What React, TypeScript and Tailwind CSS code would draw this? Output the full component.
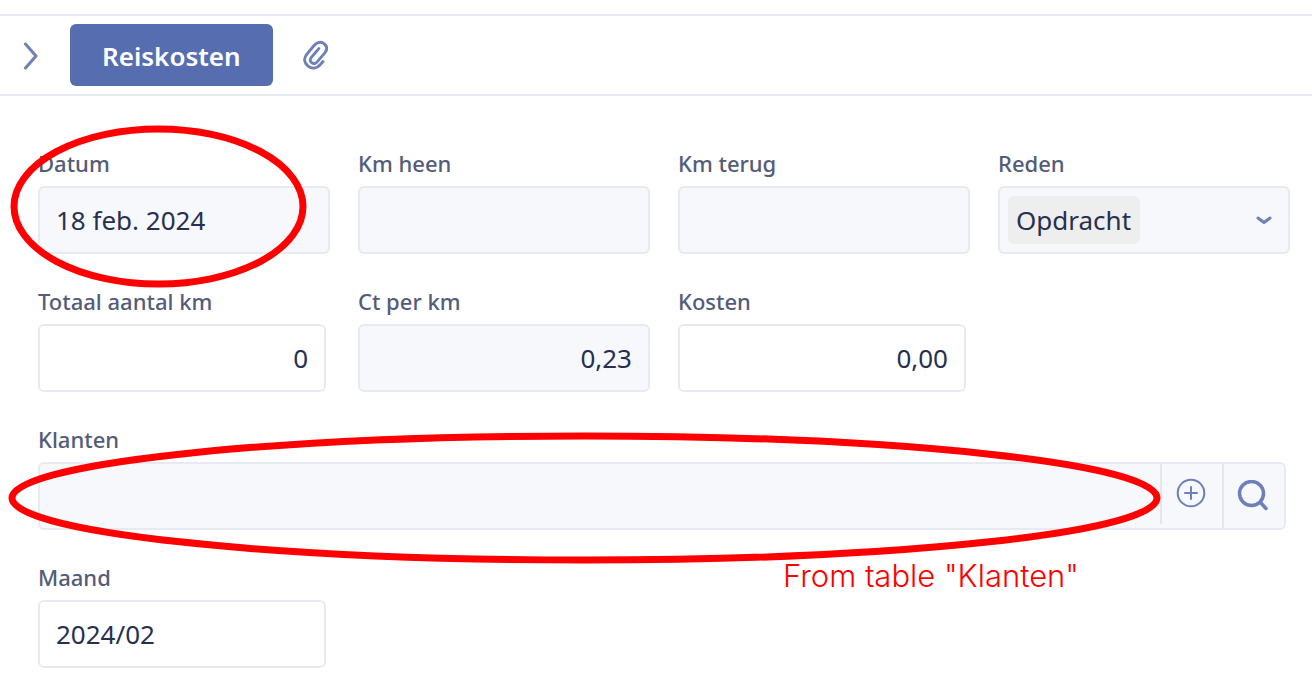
import type { ReactNode } from "react";

type FieldProps = {
  id: string;
  label: string;
  value?: string;
  readOnly?: boolean;
  numeric?: boolean;
  children?: ReactNode;
};

const labelClass = "block mb-2 text-[22px] leading-[30px] font-medium text-[#535c78]";

function Field({ id, label, value = "", readOnly, numeric, children }: FieldProps) {
  return (
    <div className={readOnly ? "relative pr-1" : "relative"}>
      <label htmlFor={id} className={labelClass}>{label}</label>
      <input
        id={id}
        type="text"
        defaultValue={value}
        readOnly={readOnly}
        className={`block w-full h-[68px] px-4 border-2 border-[#e7eaf1] rounded-md text-[26px] text-[#27304f] outline-none ${
          readOnly ? "bg-white" : "bg-[#f7f8fc]"
        } ${numeric ? "text-right" : ""}`}
      />
      {children}
    </div>
  );
}

// Red marker ring, fills its parent
function Ring() {
  return (
    <svg className="block w-full h-full overflow-visible" fill="none" stroke="#ff0000" strokeWidth="7">
      <ellipse cx="50%" cy="50%" rx="50%" ry="50%" />
    </svg>
  );
}

function Header() {
  return (
    <header className="mt-3.5 h-[82px] pl-[22px] flex items-center border-y-2 border-[#e7eaf1] text-[#6d80b8]">
      <button type="button" aria-label="Uitklappen" className="mr-8 pt-0.5">
        <svg className="block w-4 h-7" viewBox="0 0 16 28" fill="none" stroke="currentColor" strokeWidth="3" strokeLinecap="round" strokeLinejoin="round">
          <path d="M3.500 2 14 14 3.500 26" />
        </svg>
      </button>
      <button type="button" className="h-[62px] px-8 pt-0.5 rounded-md bg-[#566db0] text-white text-[26px] font-semibold">
        Reiskosten
      </button>
      <button type="button" aria-label="Bijlage" className="ml-[29px]">
        <svg className="block w-[26px] h-[30px]" viewBox="0 0 26 30" fill="none" stroke="currentColor" strokeWidth="2.9" strokeLinecap="round" strokeLinejoin="round">
          <path d="M21 21.500 18.200 24.800C14.800 28.800 9.700 29.200 6 26.200 2 22.800 1.500 18.200 4.700 14.400L12.300 5.300C15.300 1.800 19.500 1.400 22.300 3.800 25.200 6.300 25.400 9.800 22.600 13.100L15.200 21.900C13.500 23.900 11.300 24.100 9.600 22.700 7.900 21.300 7.800 19.300 9.400 17.400L16.800 8.600" />
        </svg>
      </button>
    </header>
  );
}

export default function App() {
  return (
    <div className="bg-white font-['Noto_Sans',sans-serif] overflow-x-hidden">
      <Header />
      <form className="pt-[52px] pb-[26px] pl-[38px] pr-[22px] grid grid-cols-4 gap-x-7 gap-y-8">
        <Field id="datum" label="Datum" value="18 feb. 2024">
          <div className="absolute -left-6 right-[27px] -top-[19px] -bottom-[30px] pointer-events-none">
            <Ring />
          </div>
        </Field>
        <Field id="heen" label="Km heen" />
        <Field id="terug" label="Km terug" />
        <div>
          <label htmlFor="reden" className={labelClass}>Reden</label>
          <div className="h-[68px] pl-2 pr-4 flex items-center justify-between border-2 border-[#e7eaf1] rounded-md bg-[#f7f8fc]">
            <select id="reden" className="appearance-none h-12 px-2 rounded-md bg-[#eeeeee] text-[26px] text-[#27304f] outline-none">
              <option>Opdracht</option>
            </select>
            <svg className="w-4 h-2.5 text-[#6d80b8]" viewBox="0 0 16 10" fill="none" stroke="currentColor" strokeWidth="3" strokeLinecap="round" strokeLinejoin="round">
              <path d="M2 3 8 7.500 14 3" />
            </svg>
          </div>
        </div>

        <Field id="totaal" label="Totaal aantal km" value="0" readOnly numeric />
        <Field id="ct" label="Ct per km" value="0,23" numeric />
        <Field id="kosten" label="Kosten" value="0,00" readOnly numeric />

        <div className="col-span-4 relative pr-1">
          <label htmlFor="klanten" className={labelClass}>Klanten</label>
          <div className="h-[68px] flex items-stretch border-2 border-[#e7eaf1] rounded-md bg-[#f7f8fc] text-[#6d80b8]">
            <input id="klanten" type="text" className="flex-1 min-w-0 px-4 text-[26px] text-[#27304f] outline-none" />
            <button type="button" aria-label="Toevoegen" className="w-[62px] h-[60px] pr-0.5 pb-0.5 flex items-center justify-center border-l-2 border-[#e4e6ea]">
              <svg className="w-[30px] h-[30px]" viewBox="0 0 30 30" fill="none" stroke="currentColor" strokeWidth="2" strokeLinecap="round">
                <circle cx="15" cy="15" r="13.300" />
                <path d="M15 9v12M9 15h12" />
              </svg>
            </button>
            <button type="button" aria-label="Zoeken" className="w-[62px] pr-0.5 flex items-center justify-center border-l-2 border-[#e4e6ea]">
              <svg className="w-8 h-8" viewBox="0 0 32 32" fill="none" stroke="currentColor" strokeWidth="3.500" strokeLinecap="round">
                <circle cx="14.500" cy="13.500" r="12" />
                <path d="M23.500 22.500 29 28.500" />
              </svg>
            </button>
          </div>
          <div className="absolute -left-[26px] right-[133px] top-3 -bottom-[30px] pointer-events-none">
            <Ring />
          </div>
          <p className="absolute right-[211px] top-full mt-[26px] whitespace-nowrap font-['Inter','Liberation_Sans',sans-serif] font-light text-[31px] leading-10 text-[#ff0000]">
            From table "Klanten"
          </p>
        </div>

        <Field id="maand" label="Maand" value="2024/02" readOnly />
      </form>
    </div>
  );
}
